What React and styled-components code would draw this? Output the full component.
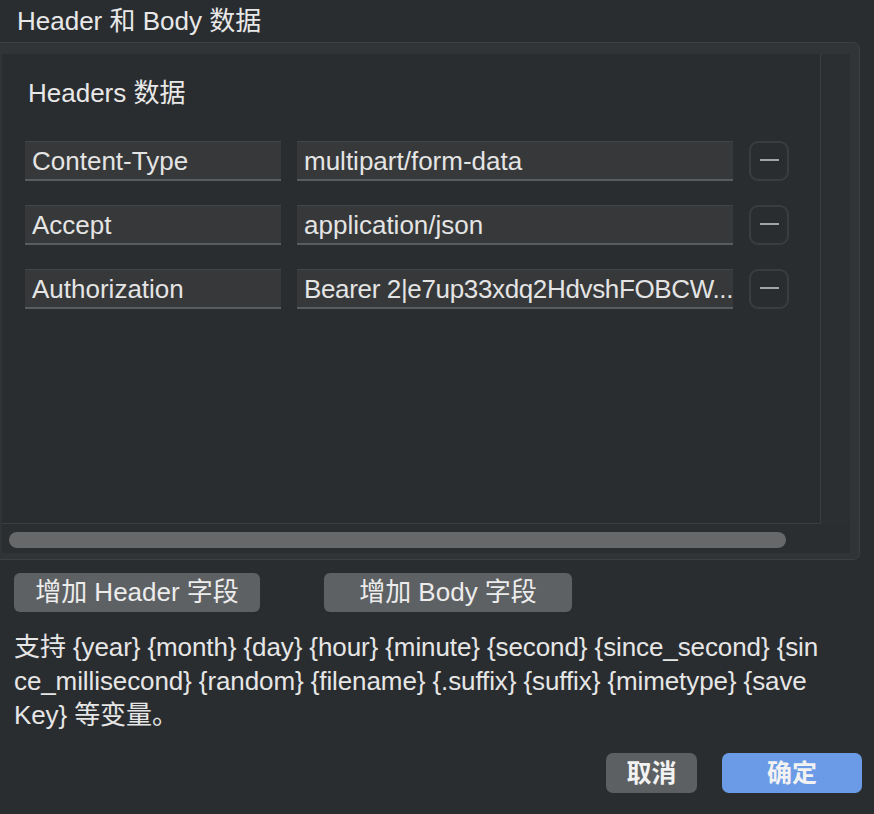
import React from 'react'
import styled, { createGlobalStyle } from 'styled-components'

const GlobalStyle = createGlobalStyle`
    body {
        margin: 0;
        background: #2a2d30;
        color: #e6e6e6;
        font-family: 'Liberation Sans', 'Noto Sans CJK SC', sans-serif;
    }
`;

const headers = [
    { key: 'Content-Type', value: 'multipart/form-data' },
    { key: 'Accept', value: 'application/json' },
    { key: 'Authorization', value: 'Bearer 2|e7up33xdq2HdvshFOBCW...' },
];

// the dialog wraps this text mid-word, keep its line breaks
const hintLines = [
    '支持 {year} {month} {day} {hour} {minute} {second} {since_second} {sin',
    'ce_millisecond} {random} {filename} {.suffix} {suffix} {mimetype} {save',
    'Key} 等变量。',
];

export default function App() {
  return (
    <>
        <GlobalStyle />
        <Page>
            <Title>Header 和 Body 数据</Title>
            <Panel>
                <ScrollView>
                    <Content>
                        <SectionTitle>Headers 数据</SectionTitle>
                        <Rows>
                            {headers.map((h) => (
                                <Row key={h.key}>
                                    <Field $width={256}>{h.key}</Field>
                                    <Field $width={436} $tight={h.value.length > 28}>{h.value}</Field>
                                    <RemoveButton aria-label="remove" />
                                </Row>
                            ))}
                        </Rows>
                    </Content>
                    <VerticalTrack />
                    <HorizontalTrack>
                        <Thumb />
                    </HorizontalTrack>
                </ScrollView>
            </Panel>
            <AddRow>
                <AddButton $width={246}>增加 Header 字段</AddButton>
                <AddButton $width={248}>增加 Body 字段</AddButton>
            </AddRow>
            <Hint>
                {hintLines.map((line) => (
                    <HintLine key={line}>{line}</HintLine>
                ))}
            </Hint>
            <Footer>
                <DialogButton $width={91}>取消</DialogButton>
                <DialogButton $width={140} $primary>确定</DialogButton>
            </Footer>
        </Page>
    </>
  )
}

const Page = styled.div`
    width: 874px;
    height: 814px;
    display: flex;
    flex-direction: column;
`;

const Title = styled.div`
    height: 42px;
    line-height: 42px;
    padding-left: 17px;
    font-size: 26px;
    color: #e8e8e8;
`;

const Panel = styled.div`
    width: 860px;
    height: 518px;
    box-sizing: border-box;
    padding: 11px 9px 6px 2px;
    background: #313437;
    border: 1px solid #3c4043;
    border-left: none;
    border-radius: 0 7px 7px 0;
`;

const ScrollView = styled.div`
    height: 100%;
    display: grid;
    grid-template-columns: 819px 1fr;
    grid-template-rows: 470px 1fr;
    background: #2b2e31;
`;

const Content = styled.div`
    box-sizing: border-box;
    padding: 19px 0 0 23px;
    border-right: 1px solid #3a3e41;
    border-bottom: 1px solid #3a3e41;
    background: #2a2d30;
`;

const SectionTitle = styled.div`
    height: 40px;
    line-height: 40px;
    font-size: 26px;
    padding-left: 3px;
    color: #e8e8e8;
    margin-bottom: 28px;
`;

const Rows = styled.div`
    display: flex;
    flex-direction: column;
    gap: 24px;
`;

const Row = styled.div`
    display: flex;
    align-items: center;
    gap: 16px;
`;

const Field = styled.div`
    width: ${(p) => p.$width}px;
    height: 40px;
    box-sizing: border-box;
    padding-left: 7px;
    line-height: 38px;
    font-size: 26px;
    letter-spacing: ${(p) => (p.$tight ? '-0.35px' : '0')};
    color: #e4e4e4;
    background: #363839;
    border-top: 1px solid #424547;
    border-bottom: 2px solid #595c5e;
    white-space: nowrap;
    overflow: hidden;
`;

const RemoveButton = styled.div`
    width: 40px;
    height: 40px;
    box-sizing: border-box;
    border: 2px solid #3a3d40;
    border-radius: 9px;
    display: flex;
    align-items: center;
    justify-content: center;

    &::before {
        content: '';
        width: 19px;
        height: 2px;
        background: #a3a4a5;
        margin-top: -2px;
    }
`;

const VerticalTrack = styled.div`
    background: #2c2f32;
`;

const HorizontalTrack = styled.div`
    grid-column: 1 / 3;
    padding: 8px 0 0 7px;
`;

const Thumb = styled.div`
    width: 777px;
    height: 16px;
    border-radius: 8px;
    background: #666869;
`;

const AddRow = styled.div`
    display: flex;
    gap: 64px;
    padding-left: 14px;
    margin-top: 13px;
`;

const AddButton = styled.div`
    width: ${(p) => p.$width}px;
    height: 39px;
    line-height: 39px;
    text-align: center;
    font-size: 26px;
    color: #ececec;
    background: #5e6163;
    border-radius: 6px;
`;

const Hint = styled.div`
    margin: 18px 0 0 14px;
    font-size: 26px;
    line-height: 34px;
    letter-spacing: -0.1px;
    color: #e6e6e6;
`;

const HintLine = styled.div`
    white-space: nowrap;
`;

const Footer = styled.div`
    display: flex;
    justify-content: flex-end;
    gap: 25px;
    padding-right: 12px;
    margin-top: 21px;
`;

const DialogButton = styled.div`
    width: ${(p) => p.$width}px;
    height: 40px;
    line-height: 40px;
    text-align: center;
    font-size: 25px;
    font-weight: 700;
    color: #f2f2f2;
    background: ${(p) => (p.$primary ? '#6b9be6' : '#5d6062')};
    border-radius: 7px;
`;
